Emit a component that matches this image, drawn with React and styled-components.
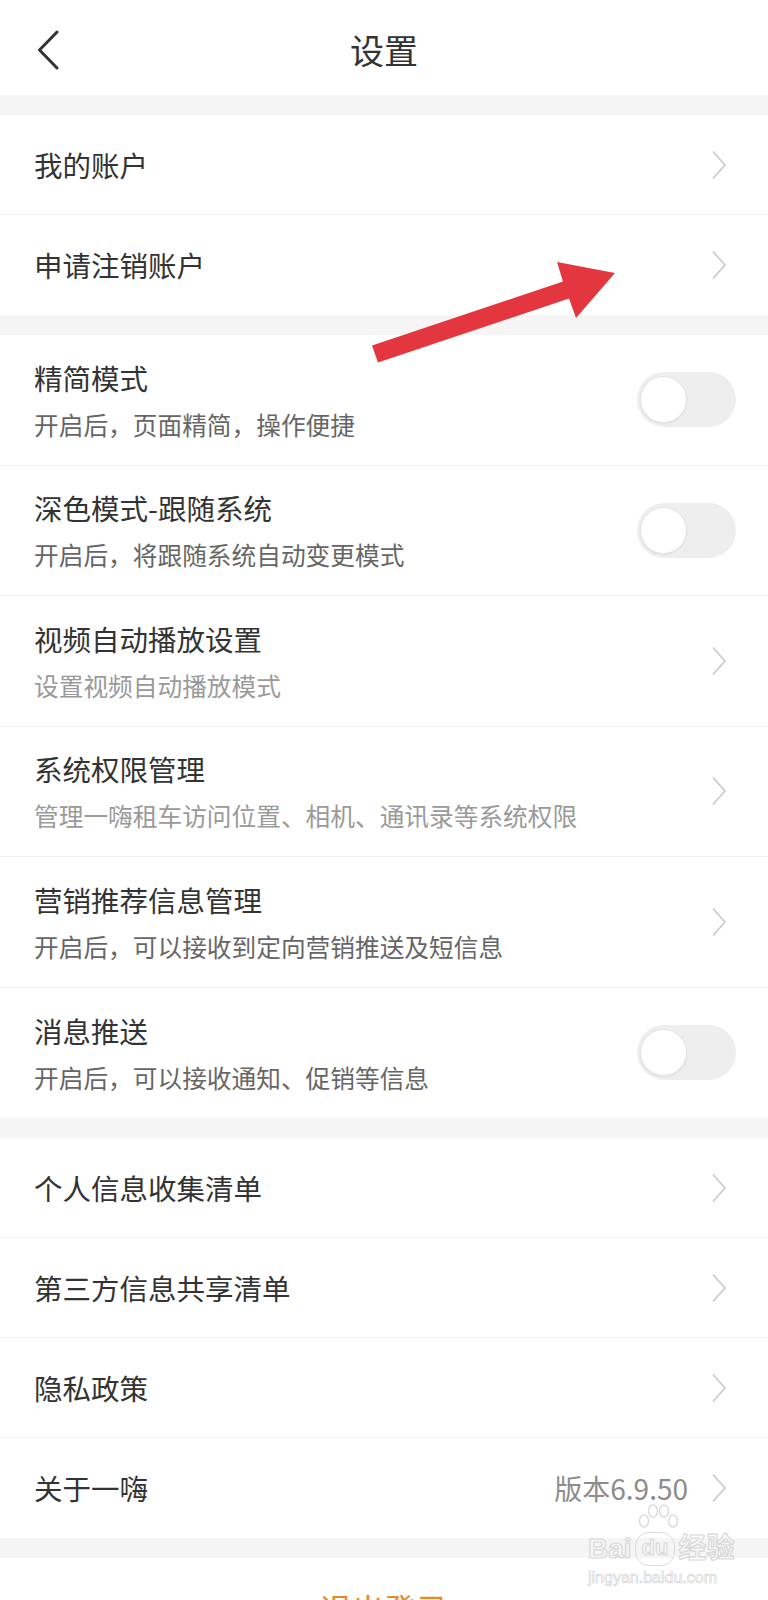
import React from "react";
import styled, { createGlobalStyle } from "styled-components";

const GlobalStyle = createGlobalStyle`
    body {
        margin: 0;
        background: #ffffff;
        font-family: "Noto Sans CJK SC", "Noto Sans", sans-serif;
    }
`;

const accountRows = [{ title: "我的账户" }, { title: "申请注销账户" }];

const featureRows = [
    { title: "精简模式", sub: "开启后，页面精简，操作便捷", toggle: true },
    { title: "深色模式-跟随系统", sub: "开启后，将跟随系统自动变更模式", toggle: true },
    { title: "视频自动播放设置", sub: "设置视频自动播放模式", muted: true },
    { title: "系统权限管理", sub: "管理一嗨租车访问位置、相机、通讯录等系统权限", muted: true },
    { title: "营销推荐信息管理", sub: "开启后，可以接收到定向营销推送及短信息" },
    { title: "消息推送", sub: "开启后，可以接收通知、促销等信息", toggle: true },
];

const infoRows = [
    { title: "个人信息收集清单" },
    { title: "第三方信息共享清单" },
    { title: "隐私政策" },
    { title: "关于一嗨", value: "版本6.9.50" },
];

function Chevron() {
    return (
        <ChevronIcon viewBox="0 0 16 30" width="16" height="30">
            <path d="M2 1.5 L14 15 L2 28.5" fill="none" stroke="#cacaca" strokeWidth="1.7" strokeLinejoin="round" />
        </ChevronIcon>
    );
}

function Row({ title, sub, muted, toggle, value }) {
    return (
        <RowBox tall={!!sub}>
            <Texts>
                <Title>{title}</Title>
                {sub && <Sub muted={muted}>{sub}</Sub>}
            </Texts>
            {value && <Value>{value}</Value>}
            {toggle ? (
                <Track>
                    <Knob />
                </Track>
            ) : (
                <Chevron />
            )}
        </RowBox>
    );
}

function App() {
    return (
        <>
            <GlobalStyle />
            <Page>
                <Header>
                    <Back>
                        <svg viewBox="0 0 24 40" width="24" height="40">
                            <path d="M21 2 L3.5 20 L21 38" fill="none" stroke="#333333" strokeWidth="3" strokeLinecap="round" strokeLinejoin="round" />
                        </svg>
                    </Back>
                    <HeaderTitle>设置</HeaderTitle>
                    <span />
                </Header>

                <Band />
                <Group>
                    {accountRows.map((r) => (
                        <Row key={r.title} {...r} />
                    ))}
                </Group>

                <Band />
                <Group>
                    {featureRows.map((r) => (
                        <Row key={r.title} {...r} />
                    ))}
                </Group>

                <Band />
                <Group>
                    {infoRows.map((r) => (
                        <Row key={r.title} {...r} />
                    ))}
                </Group>

                <Band />
                <Logout>退出登录</Logout>

                <Arrow viewBox="0 0 260 120" width="260" height="120">
                    <polygon
                        fill="#e3363f"
                        points="12,95.5 18,112.5 209,48.5 216,68 255,23 197,12 203,31.5"
                    />
                </Arrow>

                <Watermark>
                    <Paw viewBox="0 0 44 36" width="44" height="36">
                        <g fill="none" stroke="#dcdcdc" strokeWidth="1.5">
                            <ellipse cx="8" cy="17" rx="4.5" ry="6" />
                            <ellipse cx="17" cy="7" rx="4.5" ry="6" />
                            <ellipse cx="28" cy="7" rx="4.5" ry="6" />
                            <ellipse cx="37" cy="17" rx="4.5" ry="6" />
                        </g>
                    </Paw>
                    <MarkLine>
                        <MarkBig>Bai</MarkBig>
                        <MarkDu>du</MarkDu>
                        <MarkBig>经验</MarkBig>
                    </MarkLine>
                    <MarkSmall>jingyan.baidu.com</MarkSmall>
                </Watermark>
            </Page>
        </>
    );
}

export default App;

const Page = styled.div`
    position: relative;
    width: 768px;
    height: 1600px;
    overflow: hidden;
    background: #ffffff;
`;

const Header = styled.div`
    height: 95px;
    box-sizing: border-box;
    padding-top: 5px;
    display: grid;
    grid-template-columns: 1fr auto 1fr;
    align-items: center;
    background: #ffffff;
`;

const Back = styled.div`
    padding-left: 36px;
    display: flex;
    align-items: center;
`;

const HeaderTitle = styled.div`
    font-size: 34px;
    color: #333333;
    line-height: 40px;
`;

const Band = styled.div`
    height: 20px;
    background: #f5f5f5;
`;

const Group = styled.div`
    background: #ffffff;
`;

const RowBox = styled.div`
    height: ${(p) => (p.tall ? "130.5px" : "100px")};
    box-sizing: border-box;
    padding: 0 32px 0 34px;
    display: flex;
    align-items: center;
    border-bottom: 1px solid #f0f0f0;

    &:last-child {
        border-bottom: none;
    }
`;

const Texts = styled.div`
    flex: 1;
    display: flex;
    flex-direction: column;
    gap: 8px;
`;

const Title = styled.div`
    font-size: 28.5px;
    line-height: 40px;
    color: #333333;
`;

const Sub = styled.div`
    font-size: 24.7px;
    line-height: 36px;
    color: ${(p) => (p.muted ? "#9a9a9a" : "#666666")};
`;

const Value = styled.div`
    font-size: 28px;
    color: #8c8c8c;
    margin-right: 23px;
`;

const ChevronIcon = styled.svg`
    margin-right: 9px;
    flex-shrink: 0;
`;

const Track = styled.div`
    width: 99px;
    height: 55px;
    border-radius: 28px;
    background: #eeeeee;
    display: flex;
    align-items: center;
    padding-left: 3px;
    box-sizing: border-box;
`;

const Knob = styled.div`
    width: 47px;
    height: 47px;
    border-radius: 50%;
    background: #ffffff;
    border: 1px solid #e4e4e4;
    box-sizing: border-box;
    box-shadow: 0 1px 2px rgba(0, 0, 0, 0.06);
`;

const Logout = styled.div`
    height: 100px;
    display: flex;
    align-items: center;
    justify-content: center;
    font-size: 32px;
    color: #e8892c;
`;

const Arrow = styled.svg`
    position: absolute;
    left: 360px;
    top: 250px;
`;

const Watermark = styled.div`
    position: absolute;
    left: 588px;
    top: 1510px;
    width: 160px;
    display: flex;
    flex-direction: column;
    align-items: flex-start;
    pointer-events: none;
    white-space: nowrap;
`;

const Paw = styled.svg`
    position: absolute;
    left: 48px;
    top: -6px;
`;

const MarkLine = styled.div`
    display: flex;
    align-items: center;
    gap: 3px;
    margin-top: 22px;
`;

const MarkBig = styled.span`
    font-family: "Liberation Sans", "Noto Sans CJK SC", sans-serif;
    font-size: 28px;
    font-weight: 700;
    line-height: 30px;
    color: transparent;
    -webkit-text-stroke: 1.2px #d9d9d9;
`;

const MarkDu = styled.span`
    font-family: "Liberation Sans", sans-serif;
    font-size: 22px;
    font-weight: 700;
    line-height: 26px;
    padding: 2px 6px 4px;
    border: 1.5px solid #dcdcdc;
    border-radius: 14px;
    color: transparent;
    -webkit-text-stroke: 1px #d9d9d9;
`;

const MarkSmall = styled.span`
    font-family: "Liberation Sans", sans-serif;
    font-size: 16px;
    line-height: 20px;
    margin-top: 2px;
    color: transparent;
    -webkit-text-stroke: 0.7px #d6d6d6;
`;
